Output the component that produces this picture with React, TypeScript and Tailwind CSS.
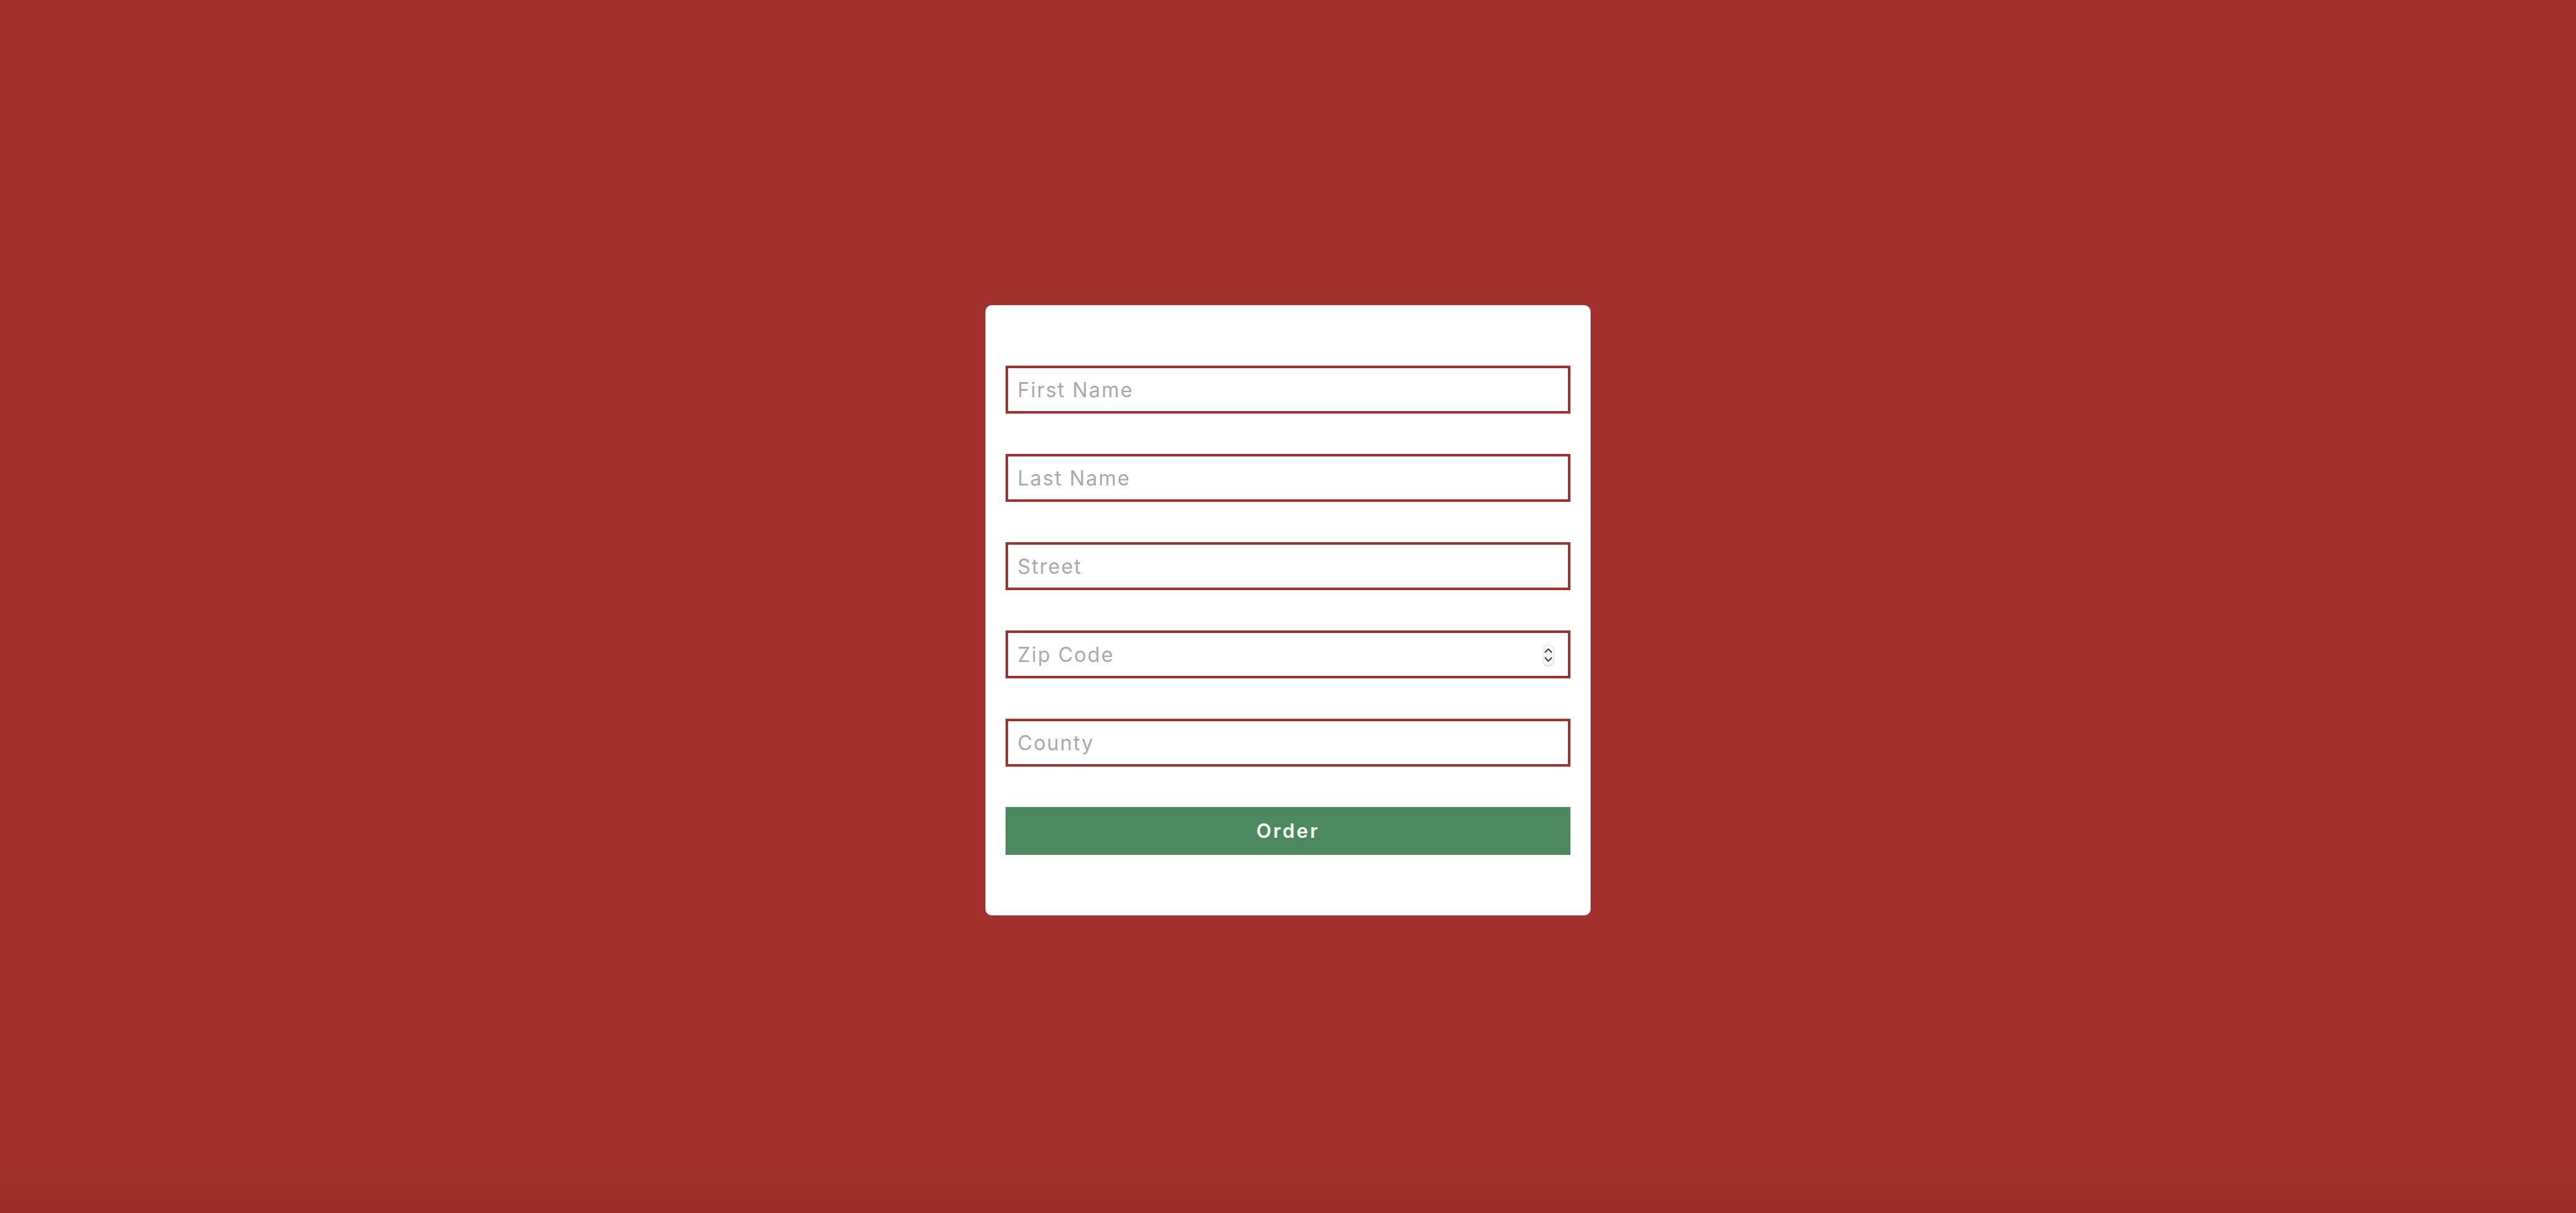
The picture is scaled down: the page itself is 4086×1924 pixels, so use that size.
import { ChevronDown, ChevronUp } from "lucide-react";

const FIELDS = [
  { name: "firstName", placeholder: "First Name", type: "text" },
  { name: "lastName", placeholder: "Last Name", type: "text" },
  { name: "street", placeholder: "Street", type: "text" },
  { name: "zip", placeholder: "Zip Code", type: "number" },
  { name: "county", placeholder: "County", type: "text" },
];

export default function App() {
  return (
    <main className="flex min-h-screen items-center justify-center bg-[linear-gradient(to_bottom,#a2312d_96%,#9a2d29)] pt-3 font-['Inter','Liberation_Sans',sans-serif]">
      <form
        className="flex w-[960px] flex-col gap-16 rounded-[10px] bg-white px-8 py-24"
        onSubmit={(e) => e.preventDefault()}
      >
        {FIELDS.map((field) => (
          <div key={field.name} className="relative">
            <input
              name={field.name}
              type={field.type}
              placeholder={field.placeholder}
              className="block h-[76px] w-full border-4 border-[#a2312d] bg-white px-[15px] text-[32px] tracking-[2px] text-zinc-800 outline-none placeholder:text-[#a9a9a9] [appearance:textfield] [&::-webkit-inner-spin-button]:appearance-none [&::-webkit-outer-spin-button]:appearance-none"
            />
            {field.type === "number" && (
              <span className="pointer-events-none absolute right-[26px] top-[22px] flex h-[34px] w-[18px] flex-col items-center justify-center overflow-hidden rounded-full border border-zinc-200 bg-white shadow-[0_1px_2px_rgba(0,0,0,0.2)]">
                <ChevronUp className="-my-[3px] size-[20px] shrink-0 text-zinc-700" strokeWidth={2.6} />
                <ChevronDown className="-my-[3px] size-[20px] shrink-0 text-zinc-700" strokeWidth={2.6} />
              </span>
            )}
          </div>
        ))}
        <button
          type="submit"
          className="h-[76px] w-full bg-[#4c895c] text-[31px] font-semibold tracking-[3px] text-white"
        >
          Order
        </button>
      </form>
    </main>
  );
}
